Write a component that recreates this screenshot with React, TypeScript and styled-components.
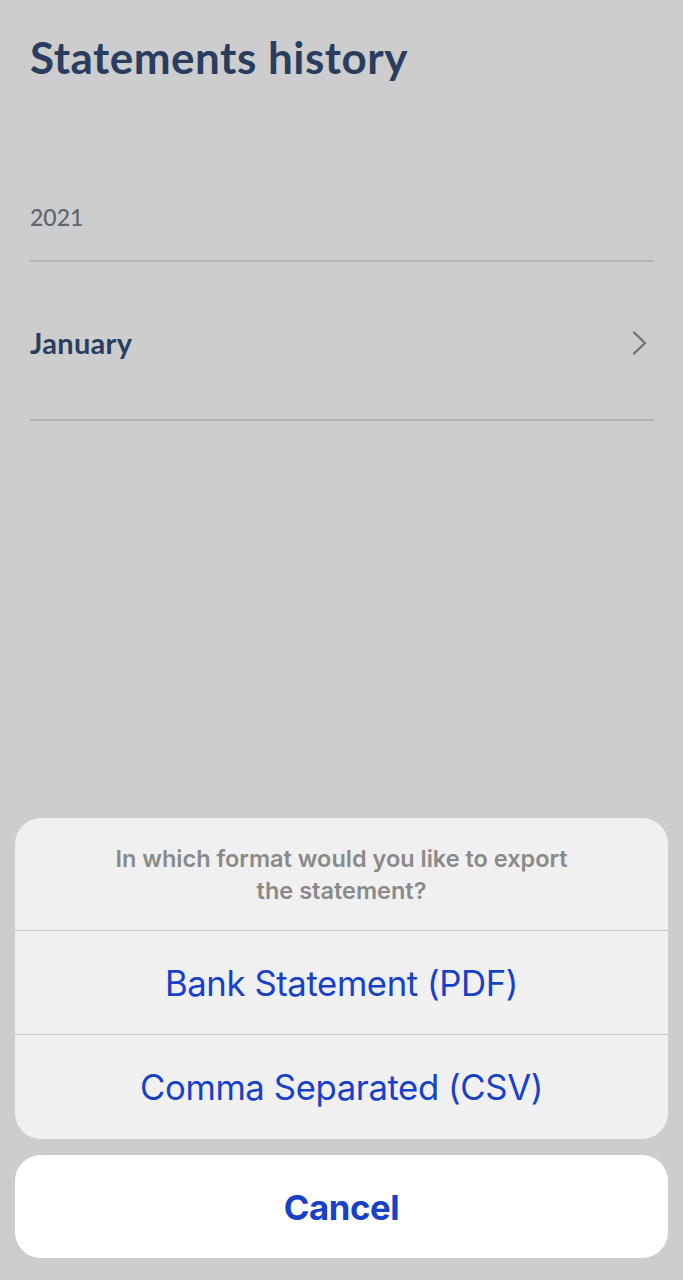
import React from "react";
import styled, { createGlobalStyle } from "styled-components";

/** ===========================================================================
 * Global
 * ============================================================================
 */
const GlobalStyle = createGlobalStyle`
  html, body {
    margin: 0;
    padding: 0;
    background: #cdcdcd;
  }
  * {
    box-sizing: border-box;
  }
`;

const COLORS = {
  DIM_BG: "#cdcdcd",
  NAVY: "#2b3d5f",
  GRAY_TEXT: "#5f666c",
  LINE: "#b3b3b3",
  SHEET: "#f0f0f0",
  SHEET_LINE: "#c9c9c9",
  SHEET_TITLE: "#8a8a8a",
  ACTION: "#1841c9",
};

/** ===========================================================================
 * Page
 * ============================================================================
 */
const Screen = styled.div`
  width: 683px;
  height: 1280px;
  background: ${COLORS.DIM_BG};
  display: flex;
  flex-direction: column;
  overflow: hidden;
`;

const Content = styled.div`
  flex: 1;
  padding: 27px 29px 0 30px;
  display: flex;
  flex-direction: column;
`;

const Title = styled.h1`
  margin: 0;
  font-family: Lato, "Open Sans", sans-serif;
  font-weight: 700;
  font-size: 44px;
  line-height: 60px;
  color: ${COLORS.NAVY};
  letter-spacing: 0.5px;
`;

const YearHeader = styled.div`
  margin-top: 117px;
  height: 58px;
  border-bottom: 2px solid ${COLORS.LINE};
  font-family: Lato, "Open Sans", sans-serif;
  font-size: 23px;
  font-weight: 500;
  line-height: 26px;
  color: ${COLORS.GRAY_TEXT};
`;

const MonthRow = styled.div`
  height: 159px;
  display: flex;
  align-items: center;
  justify-content: space-between;
  border-bottom: 2px solid ${COLORS.LINE};
  padding: 4px 6px 0 0;
`;

const MonthLabel = styled.span`
  font-family: Lato, "Open Sans", sans-serif;
  font-size: 29px;
  font-weight: 700;
  letter-spacing: 0.3px;
  color: ${COLORS.NAVY};
`;

const Chevron = () => (
  <svg width="16" height="24" viewBox="0 0 16 24" fill="none">
    <path
      d="M2 1.5 L13 12 L2 22.5"
      stroke="#747474"
      strokeWidth="2.4"
      strokeLinecap="round"
      strokeLinejoin="round"
    />
  </svg>
);

/** ===========================================================================
 * Action sheet
 * ============================================================================
 */
const Sheet = styled.div`
  padding: 0 15px 22px 15px;
  display: flex;
  flex-direction: column;
  gap: 16px;
`;

const SheetGroup = styled.div<{ $white?: boolean }>`
  background: ${(p) => (p.$white ? "#ffffff" : COLORS.SHEET)};
  border-radius: 26px;
  overflow: hidden;
  display: flex;
  flex-direction: column;
`;

const SheetMessage = styled.div`
  height: 113px;
  padding: 25px 90px 0;
  text-align: center;
  font-family: Inter, "Liberation Sans", sans-serif;
  font-size: 23.5px;
  font-weight: 600;
  line-height: 32px;
  color: ${COLORS.SHEET_TITLE};
  border-bottom: 1px solid ${COLORS.SHEET_LINE};
`;

const SheetAction = styled.div<{ $bold?: boolean; $last?: boolean }>`
  height: ${(p) => (p.$bold ? 103 : 104)}px;
  display: flex;
  align-items: center;
  justify-content: center;
  font-family: Inter, "Liberation Sans", sans-serif;
  font-size: 34.7px;
  font-weight: ${(p) => (p.$bold ? 700 : 400)};
  letter-spacing: -0.4px;
  color: ${COLORS.ACTION};
  border-bottom: ${(p) => (p.$last ? "none" : `1px solid ${COLORS.SHEET_LINE}`)};
`;

/** ===========================================================================
 * App
 * ============================================================================
 */
export default function App() {
  return (
    <>
      <GlobalStyle />
      <Screen>
        <Content>
          <Title>Statements history</Title>
          <YearHeader>2021</YearHeader>
          <MonthRow>
            <MonthLabel>January</MonthLabel>
            <Chevron />
          </MonthRow>
        </Content>
        <Sheet>
          <SheetGroup>
            <SheetMessage>
              In which format would you like to export the statement?
            </SheetMessage>
            <SheetAction>Bank Statement (PDF)</SheetAction>
            <SheetAction $last>Comma Separated (CSV)</SheetAction>
          </SheetGroup>
          <SheetGroup $white>
            <SheetAction $bold $last>
              Cancel
            </SheetAction>
          </SheetGroup>
        </Sheet>
      </Screen>
    </>
  );
}
